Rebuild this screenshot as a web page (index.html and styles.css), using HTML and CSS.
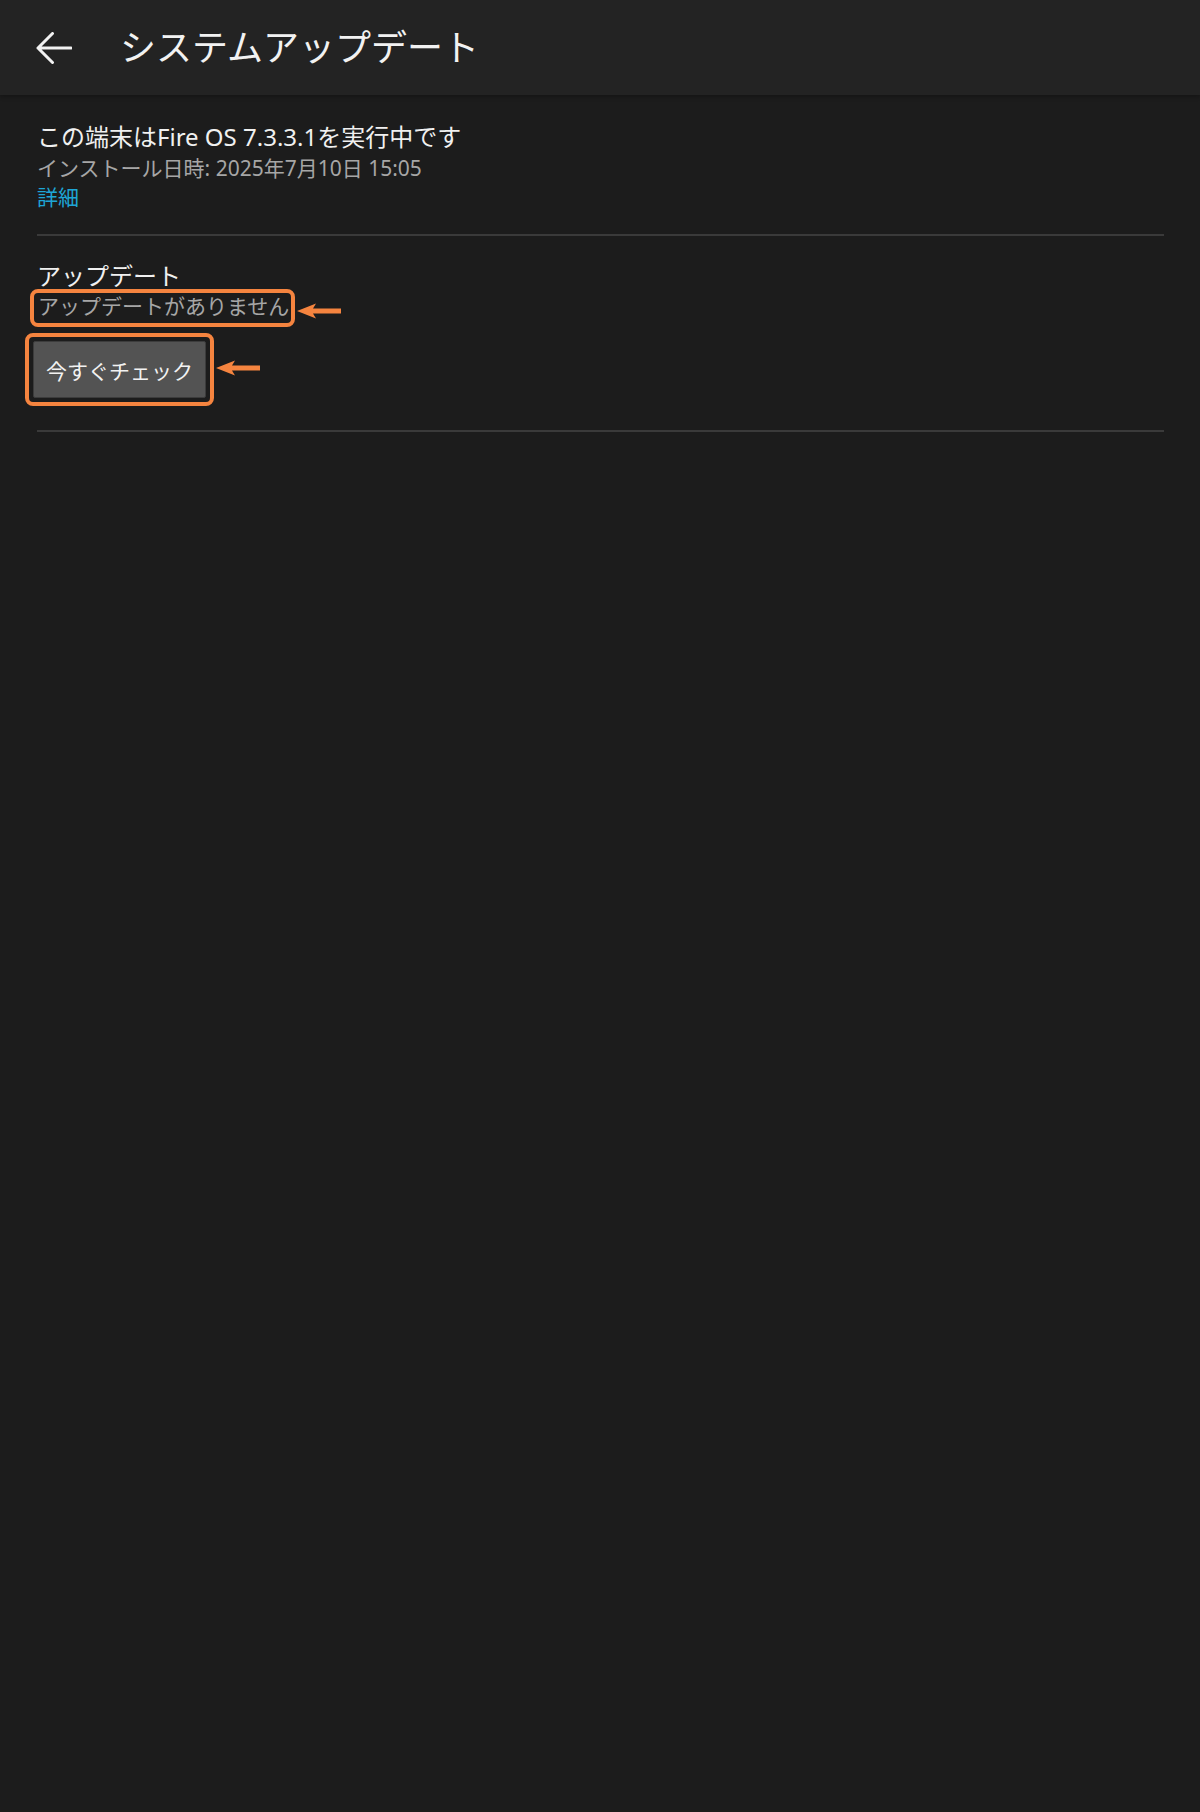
FILE: index.html
```html
<!DOCTYPE html>
<html lang="ja">
<head>
  <meta charset="UTF-8">
  <title>システムアップデート</title>
  <link rel="stylesheet" href="styles.css">
</head>
<body>
  <header class="toolbar">
    <button class="back" aria-label="戻る">
      <svg width="36" height="32" viewBox="0 0 36 32">
        <path d="M35 16H2 M16.5 1.5L2 16l14.5 14.5" fill="none" stroke="#f2f2f2" stroke-width="3" stroke-linecap="round" stroke-linejoin="round"/>
      </svg>
    </button>
    <h1>システムアップデート</h1>
  </header>

  <main class="content">
    <section class="block">
      <div class="primary">この端末はFire OS 7.3.3.1を実行中です</div>
      <div class="secondary">インストール日時: 2025年7月10日 15:05</div>
      <a class="link" href="#">詳細</a>
    </section>

    <section class="block">
      <div class="primary">アップデート</div>
      <div class="row">
        <span class="mark status">アップデートがありません</span>
        <svg class="pointer" width="44" height="16" viewBox="0 0 44 16">
          <path d="M0 8L19 0.5L16 5.5H44V10.5H16L19 15.5Z" fill="#f5843f"/>
        </svg>
      </div>
      <div class="row">
        <span class="mark action">
          <button class="check">今すぐチェック</button>
        </span>
        <svg class="pointer" width="44" height="16" viewBox="0 0 44 16">
          <path d="M0 8L19 0.5L16 5.5H44V10.5H16L19 15.5Z" fill="#f5843f"/>
        </svg>
      </div>
    </section>
  </main>
</body>
</html>
```

FILE: styles.css
```css
body {
  margin: 0;
  background: #1c1c1c;
  color: #f0f0f0;
  font-family: "Noto Sans", "Noto Sans CJK JP", sans-serif;
  min-height: 1812px;
}
.toolbar {
  height: 95px;
  background: #232323;
  box-shadow: 0 2px 4px rgba(0, 0, 0, 0.25);
  display: flex;
  align-items: center;
  padding-left: 36px;
}
.back {
  background: none;
  border: none;
  padding: 0;
  width: 36px;
  height: 32px;
  margin-right: 48px;
  cursor: pointer;
}
.back svg {
  display: block;
}
.toolbar h1 {
  margin: 0;
  font-size: 36px;
  font-weight: 400;
  line-height: 44px;
  color: #f2f2f2;
}
.content {
  padding: 0 36px 0 37px;
}
.block {
  border-bottom: 2px solid #3a3a3a;
  padding: 27px 0 23px;
}
.block + .block {
  padding-top: 25px;
  padding-bottom: 24px;
}
.primary {
  font-size: 24px;
  line-height: 30px;
  color: #f0f0f0;
}
.secondary {
  font-size: 21px;
  line-height: 27px;
  margin-top: 3px;
  color: #a6a6a6;
}
.link {
  display: block;
  font-size: 21px;
  line-height: 27px;
  margin-top: 2px;
  color: #1ea6d6;
  text-decoration: none;
}
.row {
  display: flex;
  align-items: center;
}
.mark {
  border: 4px solid #f5843f;
  border-radius: 8px;
}
.status {
  font-size: 21px;
  line-height: 27px;
  color: #a6a6a6;
  padding: 0 2px 3px 4px;
  margin-left: -7px;
  margin-top: -2px;
}
.action {
  display: block;
  padding: 4px;
  margin-left: -12px;
  margin-top: 6px;
}
.check {
  display: block;
  height: 57px;
  padding: 0 12px;
  background: #535353;
  border: 1px solid #3c3c3c;
  border-radius: 2px;
  color: #f2f2f2;
  font-family: inherit;
  font-size: 21px;
}
.pointer {
  margin-left: 2px;
  margin-top: 3px;
  flex: none;
}
```
